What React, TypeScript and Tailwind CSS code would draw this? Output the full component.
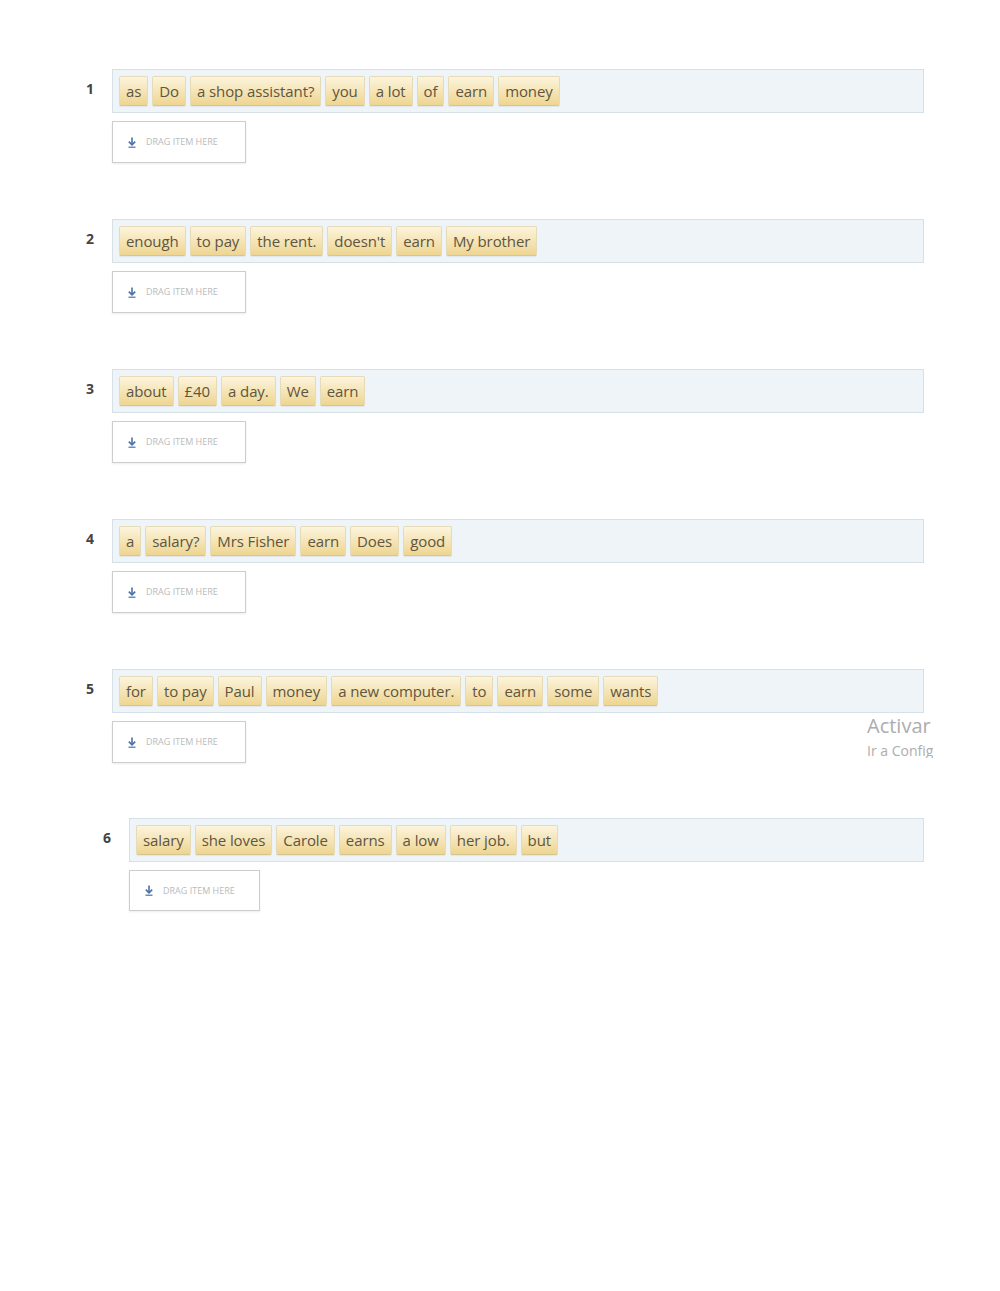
import React from "react";

const rows: { n: number; words: string[]; indent?: boolean }[] = [
  { n: 1, words: ["as", "Do", "a shop assistant?", "you", "a lot", "of", "earn", "money"] },
  { n: 2, words: ["enough", "to pay", "the rent.", "doesn't", "earn", "My brother"] },
  { n: 3, words: ["about", "£40", "a day.", "We", "earn"] },
  { n: 4, words: ["a", "salary?", "Mrs Fisher", "earn", "Does", "good"] },
  { n: 5, words: ["for", "to pay", "Paul", "money", "a new computer.", "to", "earn", "some", "wants"] },
  { n: 6, words: ["salary", "she loves", "Carole", "earns", "a low", "her job.", "but"], indent: true },
];

function Tile({ text }: { text: string }) {
  return (
    <div className="h-[30px] px-[6px] flex items-center rounded-[2px] border border-[#e6dbb8] border-b-[#d8c690] bg-linear-to-b from-[#fcf4dc] to-[#eed590] text-[15px] tracking-[-0.1px] text-[#5f5541] whitespace-nowrap shadow-[0_1px_1px_rgba(0,0,0,0.06)]">
      {text}
    </div>
  );
}

function DropBox({ narrow }: { narrow?: boolean }) {
  return (
    <div
      className={`${narrow ? "w-[131px] h-[41px]" : "w-[134px] h-[42px]"} border border-[#cdcdcd] bg-white shadow-[0_1px_2px_rgba(0,0,0,0.08)] flex items-center pl-[15px] gap-[10px]`}
    >
      <svg width="8" height="11" viewBox="0 0 8 11">
        <path d="M4 0.5v7" stroke="#4a70a8" strokeWidth="1.6" />
        <path d="M0.8 4.6l3.2 3.2 3.2-3.2" fill="none" stroke="#4a70a8" strokeWidth="1.6" />
        <path d="M0.5 10.2h7" stroke="#4a70a8" strokeWidth="1.2" />
      </svg>
      <span className="text-[9px] text-[#bababa] uppercase">Drag item here</span>
    </div>
  );
}

export default function App() {
  return (
    <div className="relative w-[1000px] h-[1291px] bg-white font-['Open_Sans','Liberation_Sans',sans-serif]">
      <div className="flex flex-col pt-[69px] gap-[56px] pr-[76px]">
        {rows.map(r => (
          <div key={r.n} className={`flex ${r.indent ? "pl-[103px] -mt-[1px]" : "pl-[86px]"}`}>
            <div className="w-[26px] shrink-0 pt-[9px] text-[14px] font-bold text-[#444]">{r.n}</div>
            <div className="flex-1 flex flex-col gap-[8px]">
              <div className="h-[44px] border border-[#d6e0e7] bg-[#eef4f8] flex items-center px-[6px] gap-[4px]">
                {r.words.map((w, i) => (
                  <Tile key={i} text={w} />
                ))}
              </div>
              <DropBox narrow={r.indent} />
            </div>
          </div>
        ))}
      </div>
      <div className="absolute left-[867px] top-[716px] w-[66px] overflow-hidden whitespace-nowrap text-[#adadad] leading-none">
        <div className="text-[20px]">Activar Windows</div>
        <div className="text-[14px] mt-[8px]">Ir a Configuración</div>
      </div>
    </div>
  );
}
